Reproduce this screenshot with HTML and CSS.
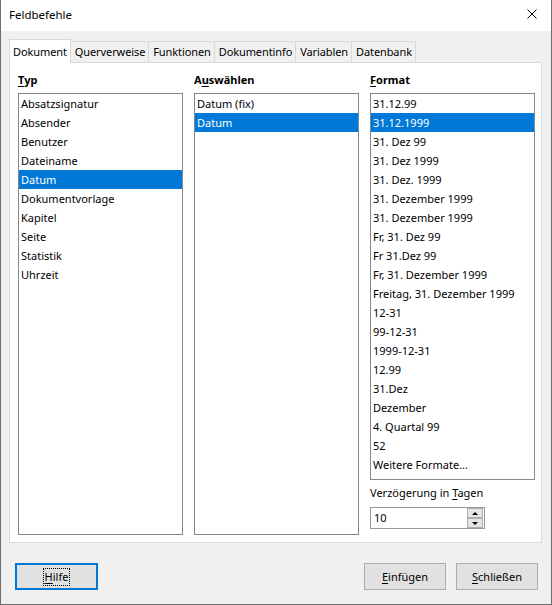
FILE: index.html
```html
<!DOCTYPE html>
<html lang="de">
<head>
<meta charset="utf-8">
<title>Feldbefehle</title>
<link rel="stylesheet" href="styles.css">
</head>
<body>
<div class="window">
  <div class="titlebar">
    <span class="title">Feldbefehle</span>
    <svg class="close" width="10" height="10" viewBox="0 0 10 10"><path d="M0.5 0.5 L9.5 9.5 M9.5 0.5 L0.5 9.5" stroke="#000" stroke-width="1" fill="none"/></svg>
  </div>
  <div class="content">
    <div class="tabs">
      <div class="tab active">Dokument</div>
      <div class="tab">Querverweise</div>
      <div class="tab">Funktionen</div>
      <div class="tab">Dokumentinfo</div>
      <div class="tab">Variablen</div>
      <div class="tab">Datenbank</div>
    </div>
    <div class="panel">
      <div class="col">
        <div class="label"><u>T</u>yp</div>
        <ul class="list tall">
          <li>Absatzsignatur</li>
          <li>Absender</li>
          <li>Benutzer</li>
          <li>Dateiname</li>
          <li class="sel">Datum</li>
          <li>Dokumentvorlage</li>
          <li>Kapitel</li>
          <li>Seite</li>
          <li>Statistik</li>
          <li>Uhrzeit</li>
        </ul>
      </div>
      <div class="col">
        <div class="label">A<u>u</u>swählen</div>
        <ul class="list tall">
          <li>Datum (fix)</li>
          <li class="sel">Datum</li>
        </ul>
      </div>
      <div class="col">
        <div class="label"><u>F</u>ormat</div>
        <ul class="list short">
          <li>31.12.99</li>
          <li class="sel">31.12.1999</li>
          <li>31. Dez 99</li>
          <li>31. Dez 1999</li>
          <li>31. Dez. 1999</li>
          <li>31. Dezember 1999</li>
          <li>31. Dezember 1999</li>
          <li>Fr, 31. Dez 99</li>
          <li>Fr 31.Dez 99</li>
          <li>Fr, 31. Dezember 1999</li>
          <li>Freitag, 31. Dezember 1999</li>
          <li>12-31</li>
          <li>99-12-31</li>
          <li>1999-12-31</li>
          <li>12.99</li>
          <li>31.Dez</li>
          <li>Dezember</li>
          <li>4. Quartal 99</li>
          <li>52</li>
          <li>Weitere Formate...</li>
        </ul>
        <div class="sublabel">Verzögerung in <u>T</u>agen</div>
        <div class="spin">
          <span class="spin-value">10</span>
          <div class="spin-buttons">
            <div class="spin-btn"><span class="arrow up"></span></div>
            <div class="spin-btn"><span class="arrow down"></span></div>
          </div>
        </div>
      </div>
    </div>
    <div class="buttons">
      <div class="btn default"><span class="focus"><u>H</u>ilfe</span></div>
      <div class="spacer"></div>
      <div class="btn"><u>E</u>infügen</div>
      <div class="btn"><u>S</u>chließen</div>
    </div>
  </div>
</div>
</body>
</html>
```
FILE: styles.css
```css
* { box-sizing: border-box; }
html, body { margin: 0; padding: 0; }
body {
  font-family: "Noto Sans", "Open Sans", sans-serif;
  font-size: 11px;
  color: #000;
  background: #fff;
}
u { text-decoration: underline; text-underline-offset: 2px; }

.window {
  width: 552px;
  height: 605px;
  border: 1px solid #6e6e6e;
  border-top: none;
  background: #f0f0f0;
  display: flex;
  flex-direction: column;
}

.titlebar {
  height: 31px;
  background: #fff;
  display: flex;
  align-items: center;
  justify-content: space-between;
  padding: 0 14px 1px 8px;
}
.title { font-size: 11.5px; line-height: 16px; }
.close { display: block; margin-top: -2px; }

.content { flex: 1; display: flex; flex-direction: column; }

.tabs {
  display: flex;
  align-items: flex-end;
  height: 24px;
  margin: 8px 0 0 8px;
}
.tab {
  height: 22px;
  line-height: 20px;
  padding: 0 3px 0 4px;
  border: 1px solid #d9d9d9;
  border-bottom: none;
  background: #f0f0f0;
  margin-left: -1px;
  white-space: nowrap;
  letter-spacing: -0.1px;
}
.tab.active {
  height: 24px;
  line-height: 24px;
  margin-left: 0;
  background: #fff;
  position: relative;
  z-index: 1;
  padding: 0 3px 0 3px;
}

.panel {
  width: 533px;
  height: 481px;
  margin: -1px 0 0 8px;
  background: #fff;
  border: 1px solid #d9d9d9;
  padding: 9px 0 0 8px;
  display: flex;
  gap: 11px;
}
.col { width: 165px; display: flex; flex-direction: column; }
.label { font-weight: bold; line-height: 16px; height: 16px; margin-bottom: 5px; }

.list {
  list-style: none;
  margin: 0;
  padding: 0;
  border: 1px solid #828790;
  background: #fff;
}
.list.tall { height: 442px; }
.list.short { height: 387px; }
.list li {
  height: 19px;
  line-height: 19px;
  padding-left: 2px;
  white-space: nowrap;
}
.list li.sel { background: #0078d7; color: #fff; }

.sublabel { line-height: 16px; margin-top: 5px; }
.spin {
  margin-top: 6px;
  width: 115px;
  height: 22px;
  border: 1px solid #999;
  display: flex;
  align-items: center;
  justify-content: space-between;
  padding: 0 0 0 3px;
}
.spin-value { line-height: 18px; }
.spin-buttons { display: flex; flex-direction: column; gap: 0; margin-right: 1px; }
.spin-btn {
  width: 16px;
  height: 10px;
  background: #e5e5e5;
  border: 1px solid #adadad;
  display: flex;
  align-items: center;
  justify-content: center;
}
.arrow { width: 0; height: 0; border-left: 3px solid transparent; border-right: 3px solid transparent; }
.arrow.up { border-bottom: 3px solid #000; }
.arrow.down { border-top: 3px solid #000; }

.buttons {
  display: flex;
  align-items: center;
  margin: 20px 13px 0 14px;
  gap: 10px;
}
.spacer { flex: 1; }
.btn {
  width: 82px;
  height: 27px;
  background: #e1e1e1;
  border: 1px solid #adadad;
  display: flex;
  align-items: center;
  justify-content: center;
  line-height: 16px;
}
.btn.default { width: 83px; border: 2px solid #0078d7; }
.focus { outline: 1px dotted #000; padding: 0 1px; line-height: 16px; }
```
